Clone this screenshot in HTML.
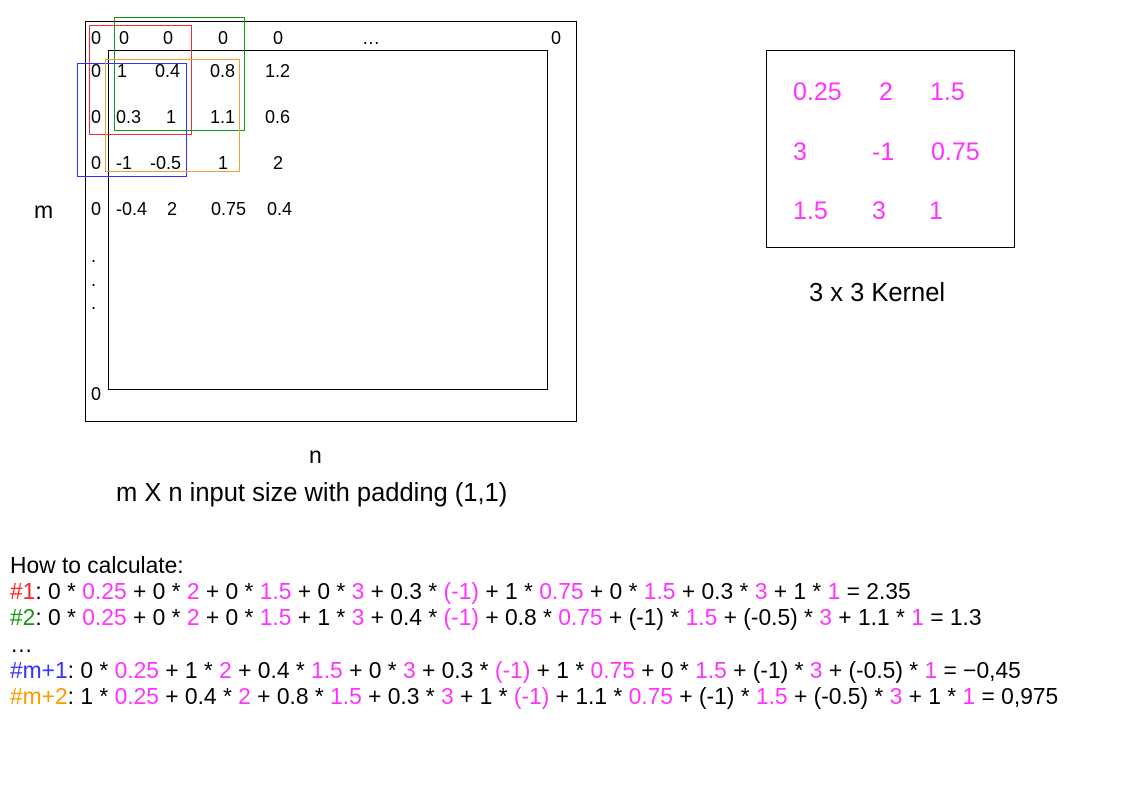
<!DOCTYPE html>
<html><head><meta charset="utf-8"><style>
body{margin:0;width:1123px;height:794px;background:#fff;position:relative;overflow:hidden;font-family:"Liberation Sans",sans-serif;color:#000}
.a{position:absolute;white-space:nowrap;line-height:1}
.b{position:absolute;box-sizing:border-box}
.m{font-size:18px}
.k{font-size:25px;color:#ff33ff}
.p{color:#ff33ff}
.eq{position:absolute;left:10px;font-size:22.8px;line-height:26.5px;white-space:nowrap}
</style></head><body>
<div class="b" style="left:85px;top:21px;width:492px;height:401px;border:1px solid #000"></div>
<div class="b" style="left:108px;top:50px;width:440px;height:340px;border:1px solid #000"></div>
<div class="b" style="left:89px;top:25px;width:103px;height:110px;border:1px solid #f03030"></div>
<div class="b" style="left:114px;top:17px;width:131px;height:114px;border:1px solid #119911"></div>
<div class="b" style="left:77px;top:63px;width:110px;height:114px;border:1px solid #3333ff"></div>
<div class="b" style="left:105px;top:59px;width:135px;height:113px;border:1px solid #f0a030"></div>

<div class="a m" style="left:91px;top:29px">0</div>
<div class="a m" style="left:119px;top:29px">0</div>
<div class="a m" style="left:163px;top:29px">0</div>
<div class="a m" style="left:218px;top:29px">0</div>
<div class="a m" style="left:273px;top:29px">0</div>
<div class="a m" style="left:362px;top:29px">…</div>
<div class="a m" style="left:551px;top:29px">0</div>

<div class="a m" style="left:91px;top:62px">0</div>
<div class="a m" style="left:117px;top:62px">1</div>
<div class="a m" style="left:155px;top:62px">0.4</div>
<div class="a m" style="left:210px;top:62px">0.8</div>
<div class="a m" style="left:265px;top:62px">1.2</div>

<div class="a m" style="left:91px;top:108px">0</div>
<div class="a m" style="left:116px;top:108px">0.3</div>
<div class="a m" style="left:166px;top:108px">1</div>
<div class="a m" style="left:210px;top:108px">1.1</div>
<div class="a m" style="left:265px;top:108px">0.6</div>

<div class="a m" style="left:91px;top:154px">0</div>
<div class="a m" style="left:116px;top:154px">-1</div>
<div class="a m" style="left:150px;top:154px">-0.5</div>
<div class="a m" style="left:218px;top:154px">1</div>
<div class="a m" style="left:273px;top:154px">2</div>

<div class="a m" style="left:91px;top:200px">0</div>
<div class="a m" style="left:116px;top:200px">-0.4</div>
<div class="a m" style="left:167px;top:200px">2</div>
<div class="a m" style="left:211px;top:200px">0.75</div>
<div class="a m" style="left:267px;top:200px">0.4</div>

<div class="a m" style="left:91px;top:247px">.</div>
<div class="a m" style="left:91px;top:271px">.</div>
<div class="a m" style="left:91px;top:294px">.</div>
<div class="a m" style="left:91px;top:385px">0</div>

<div class="a" style="left:34px;top:199px;font-size:23px">m</div>
<div class="a" style="left:309px;top:444px;font-size:23px">n</div>
<div class="a" style="left:116px;top:481px;font-size:25.5px">m X n input size with padding (1,1)</div>

<div class="b" style="left:766px;top:50px;width:249px;height:198px;border:1px solid #000"></div>
<div class="a k" style="left:793px;top:80px">0.25</div>
<div class="a k" style="left:879px;top:80px">2</div>
<div class="a k" style="left:930px;top:80px">1.5</div>
<div class="a k" style="left:793px;top:140px">3</div>
<div class="a k" style="left:872px;top:140px">-1</div>
<div class="a k" style="left:931px;top:140px">0.75</div>
<div class="a k" style="left:793px;top:199px">1.5</div>
<div class="a k" style="left:872px;top:199px">3</div>
<div class="a k" style="left:929px;top:199px">1</div>
<div class="a" style="left:809px;top:281px;font-size:25.5px">3 x 3 Kernel</div>

<div class="eq" style="top:552px">How to calculate:</div>
<div class="eq" style="top:578px"><span style="color:#ff2222">#1</span>: 0 * <span class="p">0.25</span> + 0 * <span class="p">2</span> + 0 * <span class="p">1.5</span> + 0 * <span class="p">3</span> + 0.3 * <span class="p">(-1)</span> + 1 * <span class="p">0.75</span> + 0 * <span class="p">1.5</span> + 0.3 * <span class="p">3</span> + 1 * <span class="p">1</span> = 2.35</div>
<div class="eq" style="top:604px"><span style="color:#119911">#2</span>: 0 * <span class="p">0.25</span> + 0 * <span class="p">2</span> + 0 * <span class="p">1.5</span> + 1 * <span class="p">3</span> + 0.4 * <span class="p">(-1)</span> + 0.8 * <span class="p">0.75</span> + (-1) * <span class="p">1.5</span> + (-0.5) * <span class="p">3</span> + 1.1 * <span class="p">1</span> = 1.3</div>
<div class="eq" style="top:631px">…</div>
<div class="eq" style="top:657px"><span style="color:#3333ff">#m+1</span>: 0 * <span class="p">0.25</span> + 1 * <span class="p">2</span> + 0.4 * <span class="p">1.5</span> + 0 * <span class="p">3</span> + 0.3 * <span class="p">(-1)</span> + 1 * <span class="p">0.75</span> + 0 * <span class="p">1.5</span> + (-1) * <span class="p">3</span> + (-0.5) * <span class="p">1</span> = −0,45</div>
<div class="eq" style="top:683px"><span style="color:#ff9900">#m+2</span>: 1 * <span class="p">0.25</span> + 0.4 * <span class="p">2</span> + 0.8 * <span class="p">1.5</span> + 0.3 * <span class="p">3</span> + 1 * <span class="p">(-1)</span> + 1.1 * <span class="p">0.75</span> + (-1) * <span class="p">1.5</span> + (-0.5) * <span class="p">3</span> + 1 * <span class="p">1</span> = 0,975</div>
</body></html>
